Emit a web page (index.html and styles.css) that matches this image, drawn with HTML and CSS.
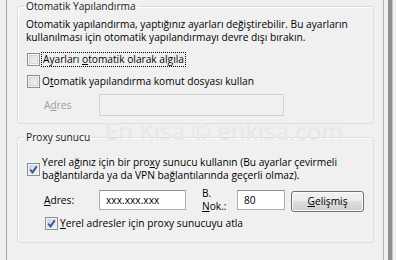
FILE: index.html
```html
<!DOCTYPE html>
<html lang="tr">
<head>
    <meta charset="UTF-8">
    <meta name="viewport" content="width=device-width, initial-scale=1.0">
    <title>Yerel Ağ (LAN) Ayarları</title>
    <link rel="stylesheet" href="styles.css">
</head>
<body>
    <div class="screen">
        <div class="window">
            <fieldset class="group group-auto">
                <legend>Otomatik Yapılandırma</legend>
                <p class="desc">Otomatik yapılandırma, yaptığınız ayarları değiştirebilir. Bu ayarların<br>kullanılması için otomatik yapılandırmayı devre dışı bırakın.</p>
                <label class="check check-first">
                    <span class="box"></span>
                    <span class="focus">Ayarları <u>o</u>tomatik olarak algıla</span>
                </label>
                <label class="check check-second">
                    <span class="box"></span>
                    <span>O<u>t</u>omatik yapılandırma komut dosyası kullan</span>
                </label>
                <div class="addr-row">
                    <span class="field-label disabled">A<u>d</u>res</span>
                    <span class="input input-disabled"></span>
                </div>
            </fieldset>

            <fieldset class="group group-proxy">
                <legend>Proxy sunucu</legend>
                <label class="check check-proxy">
                    <span class="box checked"></span>
                    <span>Yerel ağınız için bir pro<u>x</u>y sunucu kullanın (Bu ayarlar çevirmeli<br>bağlantılarda ya da VPN bağlantılarında geçerli olmaz).</span>
                </label>
                <div class="proxy-row">
                    <span class="field-label"><u>A</u>dres:</span>
                    <span class="input input-addr">xxx.xxx.xxx</span>
                    <span class="port-label">B.<br><u>N</u>ok.:</span>
                    <span class="input input-port">80</span>
                    <span class="button"><u>G</u>elişmiş</span>
                </div>
                <label class="check check-bypass">
                    <span class="box checked"></span>
                    <span><u>Y</u>erel adresler için proxy sunucuyu atla</span>
                </label>
            </fieldset>

            <div class="watermark">En Kısa © enkisa.com</div>
        </div>
        <div class="frame-edge"></div>
    </div>
</body>
</html>
```

FILE: styles.css
```css
body {
    margin: 0;
    background-color: #f0f0f0;
    font-family: "Segoe UI", "Open Sans", sans-serif;
    font-size: 10.2px;
    color: #000000;
}

.screen {
    display: flex;
    height: 260px;
    overflow: hidden;
}

.window {
    position: relative;
    box-sizing: border-box;
    width: 378px;
    height: 260px;
    margin-left: 6px;
    padding-left: 10px;
    border-left: 1px solid #a5a5a5;
    border-right: 1px solid #b4b4b4;
    background: #f0f0f0;
}

.frame-edge {
    width: 4px;
    margin-left: 4px;
    background: #8f8f8f;
    border-right: 1px solid #c9c9c9;
}

/* Group boxes */
.group {
    box-sizing: border-box;
    width: 357px;
    margin: 0;
    padding: 6px 8px 7px 8px;
    border: 1px solid #d5dfe5;
    border-radius: 3px;
    box-shadow: inset 1px 1px 0 #ffffff;
}

.group legend {
    padding: 0 2px;
    margin-left: -2px;
    line-height: 12px;
    color: #1a1a1a;
}

.group-proxy {
    margin-top: 7px;
    padding-top: 13px;
    padding-bottom: 12px;
}

.desc {
    margin: 0;
    line-height: 13px;
    white-space: nowrap;
}

/* Checkboxes */
.check {
    display: flex;
    align-items: center;
    gap: 2px;
    margin-left: 1px;
    line-height: 13px;
    white-space: nowrap;
}

.check-first { margin-top: 8px; height: 15px; }
.check-second { margin-top: 7px; height: 15px; }

.box {
    flex: none;
    box-sizing: border-box;
    width: 13px;
    height: 13px;
    border: 1px solid #8e8f8f;
    background: linear-gradient(135deg, #dcdcdc, #f6f6f6);
    box-shadow: inset 0 0 0 1px #f4f4f4, inset 0 0 0 2px #d4d4d4;
}

.box.checked {
    background: url("data:image/svg+xml,%3Csvg xmlns='http://www.w3.org/2000/svg' width='11' height='11'%3E%3Cpath d='M2.2 5.6 L4.6 8.4 L8.8 2.2' fill='none' stroke='%233c5592' stroke-width='1.9'/%3E%3C/svg%3E") center no-repeat,
        linear-gradient(135deg, #c7d2e2, #f1f4f8);
    box-shadow: inset 0 0 0 1px #f4f4f4;
}

.focus {
    padding: 0 1px;
    outline: 1px dotted #000000;
    line-height: 13px;
}

/* Address rows */
.addr-row {
    display: flex;
    align-items: center;
    margin-top: 5px;
    padding-left: 18px;
}

.field-label {
    width: 55px;
}

.disabled {
    color: #9c9c9c;
}

.input {
    box-sizing: border-box;
    display: block;
    border: 1px solid #abadb3;
    border-top-color: #8d939b;
    background: #ffffff;
    padding: 0 6px;
    line-height: 18px;
}

.input-disabled {
    width: 185px;
    height: 22px;
    border-color: #d2d2d2;
    background: #f0f0f0;
}

.proxy-row {
    display: flex;
    align-items: center;
    margin-top: 5px;
    padding-left: 18px;
    height: 25px;
}

.input-addr {
    width: 87px;
    height: 20px;
}

.port-label {
    width: 35px;
    margin-left: 16px;
    line-height: 13px;
}

.input-port {
    width: 48px;
    height: 20px;
}

.button {
    box-sizing: border-box;
    width: 73px;
    height: 21px;
    margin-left: 6px;
    margin-top: 3px;
    border: 1px solid #707070;
    border-radius: 3px;
    background: linear-gradient(#f2f2f2, #ebebeb 50%, #dddddd 50%, #cfcfcf);
    box-shadow: inset 0 0 0 1px #fbfbfb;
    text-align: center;
    line-height: 19px;
}

.check-bypass {
    margin-top: 5px;
    margin-left: 19px;
}

.watermark {
    position: absolute;
    left: 98px;
    top: 119px;
    font-size: 24px;
    line-height: 24px;
    color: #e7e7e7;
    white-space: nowrap;
    pointer-events: none;
}
```
